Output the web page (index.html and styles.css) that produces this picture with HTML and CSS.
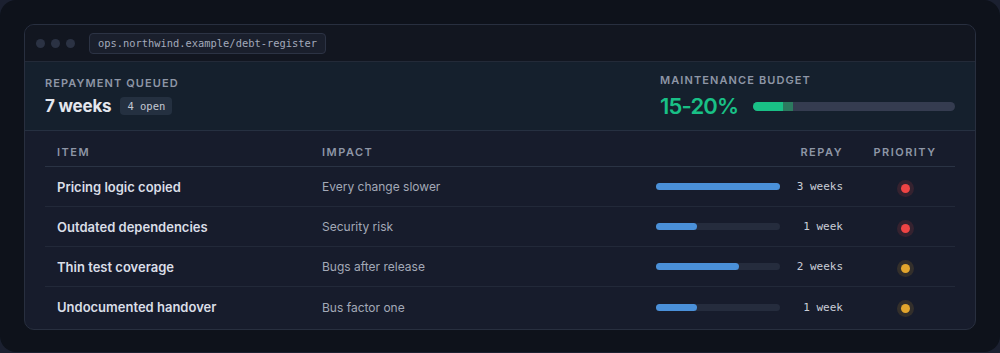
FILE: index.html
```html
<!DOCTYPE html>
<html lang="en">
<head>
  <meta charset="UTF-8">
  <title>Debt Register</title>
  <meta name="viewport" content="width=device-width, initial-scale=1.0">
  <link rel="stylesheet" href="styles.css">
</head>
<body>
  <div class="stage">
    <div class="window">
      <div class="titlebar">
        <div class="dots"><span></span><span></span><span></span></div>
        <div class="url">ops.northwind.example/debt-register</div>
      </div>

      <div class="summary">
        <div class="stat">
          <div class="label">Repayment queued</div>
          <div class="stat-row">
            <span class="big">7 weeks</span>
            <span class="badge">4 open</span>
          </div>
        </div>
        <div class="budget">
          <div class="label">Maintenance budget</div>
          <div class="stat-row">
            <span class="pct">15-20%</span>
            <div class="budget-bar">
              <span class="fill"></span><span class="fill-soft"></span>
            </div>
          </div>
        </div>
      </div>

      <div class="table">
        <div class="row head">
          <div>Item</div>
          <div>Impact</div>
          <div></div>
          <div class="right">Repay</div>
          <div class="center">Priority</div>
        </div>
        <div class="row">
          <div class="item">Pricing logic copied</div>
          <div class="impact">Every change slower</div>
          <div class="bar"><span style="width: 100%"></span></div>
          <div class="repay right">3 weeks</div>
          <div class="center"><span class="dot red"></span></div>
        </div>
        <div class="row">
          <div class="item">Outdated dependencies</div>
          <div class="impact">Security risk</div>
          <div class="bar"><span style="width: 33%"></span></div>
          <div class="repay right">1 week</div>
          <div class="center"><span class="dot red"></span></div>
        </div>
        <div class="row">
          <div class="item">Thin test coverage</div>
          <div class="impact">Bugs after release</div>
          <div class="bar"><span style="width: 67%"></span></div>
          <div class="repay right">2 weeks</div>
          <div class="center"><span class="dot amber"></span></div>
        </div>
        <div class="row">
          <div class="item">Undocumented handover</div>
          <div class="impact">Bus factor one</div>
          <div class="bar"><span style="width: 33%"></span></div>
          <div class="repay right">1 week</div>
          <div class="center"><span class="dot amber"></span></div>
        </div>
      </div>
    </div>
  </div>
</body>
</html>
```

FILE: styles.css
```css
body {
  margin: 0;
  background: #1b2030;
  font-family: Inter, "Noto Sans", sans-serif;
  color: #e2e5ec;
}
.stage {
  width: 1000px;
  box-sizing: border-box;
  padding: 24px 24px 22px 24px;
  background: #0e121b;
  border-radius: 16px;
}
.window {
  border: 1px solid #282f3f;
  border-radius: 10px;
  background: #171c2c;
  overflow: hidden;
}
.titlebar {
  display: flex;
  align-items: center;
  height: 36px;
  padding-left: 11px;
  background: #121620;
  border-bottom: 1px solid #232a38;
}
.dots {
  display: flex;
  gap: 6px;
}
.dots span {
  width: 9px;
  height: 9px;
  border-radius: 50%;
  background: #2b3243;
}
.url {
  margin-left: 14px;
  padding: 0 8px;
  height: 19px;
  line-height: 19px;
  font-family: "DejaVu Sans Mono", monospace;
  font-size: 10.4px;
  color: #a3aabb;
  background: #1a1f2c;
  border: 1px solid #2c3344;
  border-radius: 4px;
}
.summary {
  display: flex;
  justify-content: space-between;
  height: 69px;
  box-sizing: border-box;
  padding: 14px 20px 0 20px;
  background: #15202d;
  border-bottom: 1px solid #263041;
}
.label {
  font-size: 11px;
  font-weight: 600;
  letter-spacing: 1.1px;
  text-transform: uppercase;
  color: #8e96a6;
  line-height: 14px;
}
.stat-row {
  display: flex;
  align-items: center;
  margin-top: 4px;
  height: 24px;
}
.big {
  font-size: 17px;
  font-weight: 700;
  letter-spacing: -0.2px;
  color: #e4e7ee;
}
.badge {
  margin-left: 9px;
  padding: 0 7px;
  height: 18px;
  line-height: 18px;
  font-family: "DejaVu Sans Mono", monospace;
  font-size: 10.5px;
  color: #c3c8d3;
  background: #243040;
  border-radius: 4px;
}
.budget {
  width: 295px;
  margin-top: -3px;
}
.budget .stat-row {
  margin-top: 7px;
}
.pct {
  font-size: 22px;
  font-weight: 600;
  letter-spacing: -0.8px;
  color: #19c086;
}
.budget-bar {
  flex: 1;
  display: flex;
  margin-left: 15px;
  height: 9px;
  border-radius: 5px;
  background: #353c50;
  overflow: hidden;
}
.budget-bar .fill {
  width: 30px;
  background: #19c086;
}
.budget-bar .fill-soft {
  width: 10px;
  background: #2c7a5f;
}
.table {
  padding: 0 20px 2px 20px;
}
.row {
  display: grid;
  grid-template-columns: 265px 334px 148px 63px 100px;
  align-items: center;
  height: 40px;
  box-sizing: border-box;
  border-bottom: 1px solid #222939;
}
.row > div {
  padding: 0 12px;
  white-space: nowrap;
}
.row > .repay,
.row.head > .right {
  padding-left: 0;
}
.row:last-child {
  border-bottom: none;
}
.row.head {
  height: 36px;
  align-items: start;
  padding-top: 14px;
  font-size: 11px;
  font-weight: 600;
  letter-spacing: 1.5px;
  text-transform: uppercase;
  color: #8e96a6;
  line-height: 14px;
  border-bottom-color: #2a3344;
}
.right {
  text-align: right;
}
.center {
  text-align: center;
}
.item {
  font-size: 13px;
  font-weight: 600;
  color: #dadee7;
}
.impact {
  font-size: 12px;
  color: #a3a9b7;
}
.bar::before {
  content: "";
  display: block;
  height: 7px;
  border-radius: 4px;
  background: #252c3d;
  margin-bottom: -7px;
}
.bar span {
  display: block;
  height: 7px;
  border-radius: 4px;
  background: #4a90d9;
}
.repay {
  font-family: "DejaVu Sans Mono", monospace;
  font-size: 11px;
  color: #c9cdd7;
}
.dot {
  display: inline-block;
  width: 9px;
  height: 9px;
  border-radius: 50%;
  vertical-align: middle;
}
.dot.red {
  background: #ef4444;
  box-shadow: 0 0 0 4px rgba(239, 68, 68, 0.14);
}
.dot.amber {
  background: #e2a52d;
  box-shadow: 0 0 0 4px rgba(226, 165, 45, 0.14);
}
```
